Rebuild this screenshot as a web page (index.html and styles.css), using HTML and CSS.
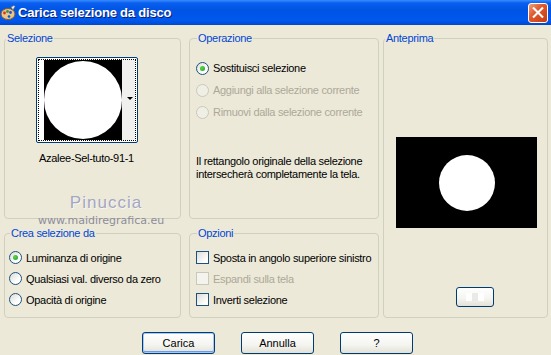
FILE: index.html
```html
<!DOCTYPE html>
<html lang="it">
<head>
  <meta charset="UTF-8" />
  <title>Carica selezione da disco</title>
  <link rel="stylesheet" href="styles.css">
</head>
<body>
  <div class="window">
    <header class="titlebar">
      <svg class="app-icon" width="16" height="16" viewBox="0 0 16 16">
        <ellipse cx="8" cy="9" rx="7" ry="5.5" fill="#e8c58a" stroke="#8a5a2a" stroke-width="1"/>
        <circle cx="4.5" cy="8" r="1.4" fill="#e03020"/>
        <circle cx="7.5" cy="6.5" r="1.4" fill="#30a030"/>
        <circle cx="10.5" cy="7.5" r="1.4" fill="#2050e0"/>
        <circle cx="9" cy="11.5" r="1.3" fill="#0054e3"/>
        <path d="M11 2 L14 0.5 L15 1.5 L13 5 Z" fill="#f0f0f0" stroke="#666" stroke-width="0.6"/>
      </svg>
      <span class="title">Carica selezione da disco</span>
      <span class="close">
        <svg width="19" height="19" viewBox="0 0 19 19">
          <path d="M5 5 L14 14 M14 5 L5 14" stroke="#fff" stroke-width="2.2" stroke-linecap="square"/>
        </svg>
      </span>
    </header>

    <main class="dialog">
      <div class="panels">
        <fieldset class="group sel">
          <legend>Selezione</legend>
          <div class="thumb">
            <div class="thumb-inner">
              <div class="thumb-img"><div class="thumb-circle"></div></div>
              <div class="thumb-strip"><span class="arrow"></span></div>
            </div>
          </div>
          <div class="thumb-name">Azalee-Sel-tuto-91-1</div>
        </fieldset>

        <fieldset class="group op">
          <legend>Operazione</legend>
          <label class="choice"><span class="radio checked"></span>Sostituisci selezione</label>
          <label class="choice disabled"><span class="radio"></span>Aggiungi alla selezione corrente</label>
          <label class="choice disabled"><span class="radio"></span>Rimuovi dalla selezione corrente</label>
          <p class="note">Il rettangolo originale della selezione<br>intersecherà completamente la tela.</p>
        </fieldset>

        <fieldset class="group preview">
          <legend>Anteprima</legend>
          <div class="preview-img"><div class="preview-circle"></div></div>
          <button class="btn small"><span class="checker"></span></button>
        </fieldset>

        <fieldset class="group crea">
          <legend>Crea selezione da</legend>
          <label class="choice"><span class="radio checked"></span>Luminanza di origine</label>
          <label class="choice"><span class="radio"></span>Qualsiasi val. diverso da zero</label>
          <label class="choice"><span class="radio"></span>Opacità di origine</label>
        </fieldset>

        <fieldset class="group opt">
          <legend>Opzioni</legend>
          <label class="choice"><span class="check"></span>Sposta in angolo superiore sinistro</label>
          <label class="choice disabled"><span class="check"></span>Espandi sulla tela</label>
          <label class="choice"><span class="check"></span>Inverti selezione</label>
        </fieldset>
      </div>

      <div class="actions">
        <button class="btn default">Carica</button>
        <button class="btn">Annulla</button>
        <button class="btn">?</button>
      </div>

      <div class="watermark">
        <div class="wm-name">Pinuccia</div>
        <div class="wm-site">www.maidiregrafica.eu</div>
      </div>
    </main>
  </div>
</body>
</html>
```

FILE: styles.css
```css
* {
  margin: 0; padding: 0; box-sizing: border-box;
}
body {
  width: 551px;
  height: 355px;
  overflow: hidden;
  background: #ece9d8;
  font-family: "Liberation Sans", Arial, sans-serif;
  font-size: 11px;
  letter-spacing: -0.3px;
  color: #000;
}

.titlebar {
  height: 25px;
  display: flex;
  align-items: center;
  background: linear-gradient(#3a8cff 0, #0a5ff0 12%, #0054e3 40%, #0058ee 80%, #0048d0 100%);
  color: #fff;
}
.app-icon {
  margin: 0 2px 0 0;
}
.title {
  font-weight: bold;
  font-size: 13px;
  letter-spacing: -0.2px;
  text-shadow: 1px 1px 0 #0a1e7a;
  flex: 1;
}
.close {
  width: 20px;
  height: 20px;
  margin-right: 3px;
  border: 1px solid #fff;
  border-radius: 3px;
  background: linear-gradient(135deg, #f0a080 0, #e05a2e 40%, #c83a10 100%);
  display: flex;
  align-items: center;
  justify-content: center;
}

.dialog {
  position: relative;
  height: 330px;
}
.panels {
  display: grid;
  grid-template-columns: 181px 190px 165px;
  grid-template-rows: 187px 91px;
  column-gap: 4px;
  row-gap: 8px;
  padding: 7px 0 0 4px;
}
.group {
  border: 1px solid #d0d0bf;
  border-radius: 4px;
  min-width: 0;
  padding: 0 0 0 6px;
}
.group legend {
  color: #0046d5;
  padding: 0 1px;
  margin-left: 1px;
  line-height: 13px;
}
.sel, .crea {
  margin-right: 4px;
}
.preview {
  grid-column: 3;
  grid-row: 1 / 3;
  display: flex;
  flex-direction: column;
  align-items: center;
  padding: 0;
}

/* selection thumbnail */
.sel {
  display: flex;
  flex-direction: column;
  align-items: center;
  padding: 0 12px 0 0;
}
.thumb {
  margin-top: 12px;
  width: 102px;
  height: 86px;
  border: 1px solid #003c74;
  border-radius: 2px;
  background: #fff;
  padding: 1px;
}
.thumb-inner {
  height: 100%;
  border: 1px dotted #000;
  display: flex;
}
.thumb-img {
  width: 78px;
  margin-left: 5px;
  background: #000;
  display: flex;
  align-items: center;
  justify-content: center;
}
.thumb-circle {
  width: 78px;
  height: 78px;
  border-radius: 50%;
  background: #fff;
}
.thumb-strip {
  flex: 1;
  background: #f0f0ee;
  position: relative;
}
.arrow {
  position: absolute;
  right: 2px;
  top: 37px;
  border-left: 3px solid transparent;
  border-right: 3px solid transparent;
  border-top: 3px solid #000;
}
.thumb-name {
  margin-top: 9px;
}

/* choices */
.op {
  padding-top: 12px;
}
.choice {
  display: flex;
  align-items: center;
  height: 22px;
  gap: 4px;
  white-space: nowrap;
}
.crea {
  padding: 7px 0 0 4px;
}
.crea .choice, .opt .choice {
  height: 21px;
}
.opt {
  padding: 7px 0 0 6px;
}
.choice.disabled {
  color: #aca899;
}
.radio {
  width: 13px;
  height: 13px;
  border-radius: 50%;
  border: 1px solid #1c5180;
  background: linear-gradient(135deg, #dcdcd7 0, #fff 70%);
  display: flex;
  align-items: center;
  justify-content: center;
  flex: none;
}
.radio.checked::after {
  content: "";
  width: 5px;
  height: 5px;
  border-radius: 50%;
  background: radial-gradient(circle at 35% 35%, #5bd44a, #21a121);
}
.disabled .radio {
  border-color: #cac8bb;
  background: #f0efe6;
}
.check {
  width: 13px;
  height: 13px;
  border: 1px solid #1c5180;
  background: linear-gradient(135deg, #dcdcd7 0, #fff 80%);
  flex: none;
}
.disabled .check {
  border-color: #cac8bb;
  background: #f4f3ee;
}
.note {
  margin-top: 32px;
  line-height: 13px;
  white-space: nowrap;
}

/* preview */
.preview-img {
  margin: 92px 0 0 2px;
  width: 141px;
  height: 91px;
  background: #000;
  display: flex;
  align-items: center;
  justify-content: center;
}
.preview-circle {
  width: 56px;
  height: 56px;
  border-radius: 50%;
  background: #fff;
}
.btn {
  font-family: inherit;
  font-size: 11px;
  color: #000;
  width: 73px;
  height: 22px;
  border: 1px solid #003c74;
  border-radius: 3px;
  background: linear-gradient(#fff 0, #f4f4f0 60%, #e3e1d6 100%);
}
.btn.small {
  width: 38px;
  height: 20px;
  margin-top: 59px;
  margin-left: 18px;
  display: flex;
  align-items: center;
  justify-content: center;
}
.checker {
  width: 18px;
  height: 8px;
  background:
    linear-gradient(90deg, #fff 0 33%, #e8e8e4 33% 66%, #fff 66%);
  opacity: 0.9;
}
.btn.default {
  box-shadow: inset 0 0 0 1px #a8c8f5, inset 0 -1px 0 1px #6d9ae8;
}

.actions {
  display: flex;
  gap: 26px;
  padding-left: 142px;
  margin-top: 14px;
}

.watermark {
  position: absolute;
  left: 38px;
  top: 168px;
  width: 124px;
  text-align: center;
  pointer-events: none;
}
.wm-name {
  font-family: "Liberation Sans", sans-serif;
  font-size: 17px;
  letter-spacing: 1px;
  line-height: 19px;
  padding-left: 12px;
  color: #a4a6c2;
  text-shadow: 1px 1px 0 #f8f8f4;
}
.wm-site {
  font-family: "DejaVu Sans", sans-serif;
  font-size: 11px;
  letter-spacing: 0;
  line-height: 13px;
  margin-top: 2px;
  color: #8c8c9c;
}
```
